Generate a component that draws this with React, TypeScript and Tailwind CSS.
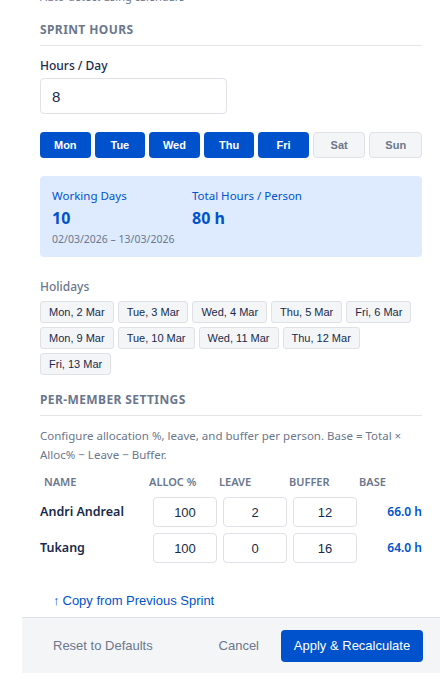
import React from "react";

const days = [
  { label: "Mon", on: true },
  { label: "Tue", on: true },
  { label: "Wed", on: true },
  { label: "Thu", on: true },
  { label: "Fri", on: true },
  { label: "Sat", on: false },
  { label: "Sun", on: false },
];

const holidays = [
  "Mon, 2 Mar",
  "Tue, 3 Mar",
  "Wed, 4 Mar",
  "Thu, 5 Mar",
  "Fri, 6 Mar",
  "Mon, 9 Mar",
  "Tue, 10 Mar",
  "Wed, 11 Mar",
  "Thu, 12 Mar",
  "Fri, 13 Mar",
];

const members = [
  { name: "Andri Andreal", alloc: "100", leave: "2", buffer: "12", base: "66.0 h" },
  { name: "Tukang", alloc: "100", leave: "0", buffer: "16", base: "64.0 h" },
];

const arial = "font-['Liberation_Sans',Arial,sans-serif]";

function SectionTitle({ children }: { children: React.ReactNode }) {
  return (
    <div className="border-b border-[#e4e6ea] pb-[7px]">
      <h3 className="text-[12px] leading-4 font-bold tracking-[0.4px] uppercase text-[#6b778c]">
        {children}
      </h3>
    </div>
  );
}

function CellInput({ value }: { value: string }) {
  return (
    <input
      readOnly
      value={value}
      className={`${arial} ml-1 w-[64px] h-[30px] rounded-[4px] border border-[#dfe1e6] bg-white text-center text-[13px] text-[#172b4d] outline-none`}
    />
  );
}

export default function App() {
  return (
    <div className="w-[440px] h-[677px] overflow-hidden bg-white font-['Noto_Sans',sans-serif] text-[#172b4d]">
      <div className="ml-[22px] w-[418px] flex flex-col">
        {/* Body */}
        <div className="px-[18px]">
          <p className="-mt-[10px] text-[11px] leading-[14px] text-[#6b778c]">
            Auto-detect using calendars
          </p>

          <div className="mt-[18px]">
            <SectionTitle>Sprint Hours</SectionTitle>
          </div>

          <label className="block mt-[11px] text-[12px] leading-[18px] font-medium text-[#172b4d]">
            Hours / Day
          </label>
          <input
            readOnly
            value="8"
            className={`${arial} mt-[3px] w-[187px] h-[36px] rounded-[4px] border border-[#dfe1e6] px-[11px] text-[15px] text-[#172b4d] outline-none`}
          />

          <div className="mt-[18px] flex gap-1">
            {days.map((d) => (
              <button
                key={d.label}
                className={`${arial} flex-1 h-[26px] rounded-[4px] text-[11px] font-bold ${
                  d.on
                    ? "bg-[#0052cc] text-white"
                    : "bg-[#f4f5f7] border border-[#dfe1e6] text-[#6b778c]"
                }`}
              >
                {d.label}
              </button>
            ))}
          </div>

          {/* Summary */}
          <div className="mt-[18px] rounded-[4px] bg-[#deebff] pl-3 pt-3 pb-[11px] flex">
            <div className="w-[140px]">
              <div className="text-[11.5px] leading-4 text-[#0052cc]">Working Days</div>
              <div className="mt-1 text-[16px] leading-5 font-bold text-[#0052cc]">10</div>
              <div className="mt-1 text-[10.5px] leading-[14px] text-[#6b778c] whitespace-nowrap">
                02/03/2026 – 13/03/2026
              </div>
            </div>
            <div>
              <div className="text-[11.5px] leading-4 text-[#0052cc]">Total Hours / Person</div>
              <div className="mt-1 text-[16px] leading-5 font-bold text-[#0052cc]">80 h</div>
            </div>
          </div>

          {/* Holidays */}
          <div className="mt-[22px] text-[12px] leading-4 font-medium text-[#6b778c]">Holidays</div>
          <div className="mt-[6px] flex flex-wrap gap-1">
            {holidays.map((h) => (
              <span
                key={h}
                className={`${arial} h-[22px] px-2 flex items-center rounded-[3px] border border-[#dfe1e6] bg-[#f4f5f7] text-[11px] text-[#172b4d]`}
              >
                {h}
              </span>
            ))}
          </div>

          <div className="mt-[17px]">
            <SectionTitle>Per-Member Settings</SectionTitle>
          </div>

          <p className="mt-[10px] text-[11.5px] leading-[19px] text-[#6b778c]">
            Configure allocation %, leave, and buffer per person. Base = Total × Alloc% − Leave − Buffer.
          </p>

          {/* Members table */}
          <div className="mt-[11px] grid grid-cols-[109px_70px_70px_70px_1fr] text-[11px] leading-[14px] font-semibold uppercase text-[#6b778c]">
            <div className="pl-1">Name</div>
            <div>Alloc %</div>
            <div>Leave</div>
            <div>Buffer</div>
            <div>Base</div>
          </div>
          <div className="mt-[8px] flex flex-col gap-[6px]">
            {members.map((m) => (
              <div key={m.name} className="grid grid-cols-[109px_70px_70px_70px_1fr] items-center">
                <div className="text-[12.5px] font-semibold text-[#172b4d]">{m.name}</div>
                <CellInput value={m.alloc} />
                <CellInput value={m.leave} />
                <CellInput value={m.buffer} />
                <div className="text-right text-[12px] font-semibold text-[#0052cc]">{m.base}</div>
              </div>
            ))}
          </div>

          <button className={`${arial} mt-[30px] ml-[13px] flex items-center gap-[3px] text-[13px] leading-4 text-[#0052cc]`}>
            <span className="font-bold text-[13px]">↑</span>
            Copy from Previous Sprint
          </button>
        </div>

        {/* Footer */}
        <div className="mt-[8px] h-[56px] border-t border-[#dfe1e6] bg-[#f4f5f7] pl-[18px] pr-[17px] flex items-center">
          <button className={`${arial} px-[13px] h-[32px] text-[13px] text-[#6b778c]`}>
            Reset to Defaults
          </button>
          <div className="flex-1" />
          <button className={`${arial} px-3 h-[32px] text-[13px] text-[#6b778c]`}>Cancel</button>
          <button
            className={`${arial} ml-[10px] w-[142px] h-[32px] rounded-[4px] bg-[#0052cc] text-[13px] text-white`}
          >
            Apply &amp; Recalculate
          </button>
        </div>
      </div>
    </div>
  );
}
